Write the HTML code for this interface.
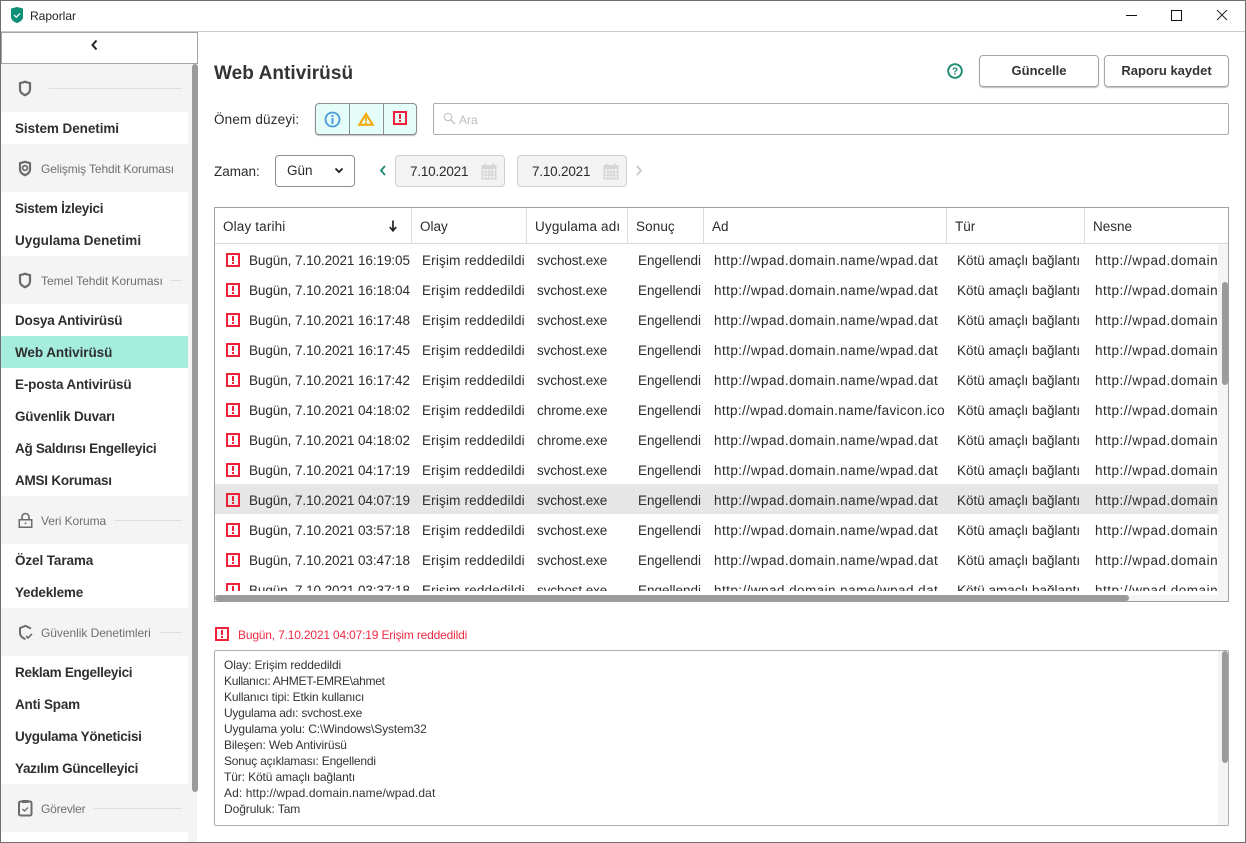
<!DOCTYPE html>
<html lang="tr"><head><meta charset="utf-8"><title>Raporlar</title>
<style>
*{box-sizing:border-box}
html,body{margin:0;padding:0;background:#fff}
body{width:1246px;height:843px;position:relative;overflow:hidden;font-family:"Liberation Sans",sans-serif;font-size:13.5px;color:#2b2b2b}
.a{position:absolute}
.t{position:absolute;white-space:nowrap;line-height:18px}
.g{position:absolute;left:1px;width:187px;background:#fff}
.sec{position:absolute;left:41px;font-size:12px;color:#6f6f6f;white-space:nowrap;line-height:16px}
.ln{position:absolute;height:1px;background:#e0e0e0}
.nav{position:absolute;left:15px;font-weight:bold;font-size:13.5px;color:#2f2f2f;white-space:nowrap;line-height:18px}
.th{position:absolute;top:218px;font-size:13.5px;white-space:nowrap;line-height:18px}
.cs{position:absolute;top:208px;width:1px;height:35px;background:#dcdcdc}
.ex{position:absolute;left:226px;width:14px;height:14px;border:2px solid #ee2139;background:transparent}
.ex:before{content:"";position:absolute;left:4px;top:1px;width:2px;height:5px;background:#ee2139}
.ex:after{content:"";position:absolute;left:4px;top:7px;width:2px;height:2px;background:#ee2139}
.r{position:absolute;left:0;width:1218px;height:30px}
.r .ex{top:8px}
.c{position:absolute;top:7px;white-space:nowrap;line-height:18px;font-size:13.5px;overflow:hidden}
.d{left:249px;width:165px;letter-spacing:-.08px}
.e{left:422px;width:104px;letter-spacing:.18px}
.s{left:537px;width:88px;letter-spacing:-.1px}
.n{left:638px;width:65px}
.u{left:714px;width:232px;letter-spacing:.44px}
.k{left:957px;width:127px}
.o{left:1095px;width:123px;letter-spacing:.5px}
.det{position:absolute;left:224px;font-size:12px;line-height:16px;color:#333;white-space:nowrap}
</style></head><body>

<!-- window frame -->
<div class="a" style="left:0;top:0;width:1246px;height:1px;background:#6e6e6e"></div>
<div class="a" style="left:0;top:0;width:1px;height:843px;background:#6e6e6e"></div>
<div class="a" style="left:1245px;top:0;width:1px;height:843px;background:#6e6e6e"></div>
<div class="a" style="left:0;top:842px;width:1246px;height:1px;background:#6e6e6e"></div>
<div class="a" style="left:1px;top:31px;width:1244px;height:1px;background:#c9c9c9"></div>

<!-- title -->
<svg class="a" style="left:10px;top:6px" width="14" height="18" viewBox="0 0 14 18"><path d="M1 2.500L7 1l6 1.500V11c0 3-3 5-6 6-3-1-6-3-6-6z" fill="#0f8f78"/><path d="M4 9l2.300 2.200L10 7.500" fill="none" stroke="#e6fff8" stroke-width="1.300"/></svg>
<div class="t" style="left:30px;top:7px;font-size:12px;color:#222">Raporlar</div>
<div class="a" style="left:1126px;top:15px;width:11px;height:1px;background:#111"></div>
<div class="a" style="left:1171px;top:10px;width:11px;height:11px;border:1px solid #111"></div>
<svg class="a" style="left:1216px;top:9px" width="12" height="12" viewBox="0 0 12 12"><path d="M1 1l10 10M11 1L1 11" stroke="#222" stroke-width="1" fill="none"/></svg>

<!-- sidebar -->
<div class="a" style="left:1px;top:64px;width:196px;height:778px;background:#f4f4f4"></div>
<div class="a" style="left:1px;top:32px;width:197px;height:32px;background:#fff;border:1px solid #a4a4a4"></div>
<svg class="a" style="left:90px;top:39px" width="9" height="12" viewBox="0 0 9 12"><path d="M6.500 1.500L2.500 6l4 4.500" fill="none" stroke="#222" stroke-width="2"/></svg>
<div class="a" style="left:192px;top:64px;width:6px;height:728px;background:#9b9b9b;border-radius:3px"></div>

<div class="g" style="top:112px;height:32px"></div>
<div class="g" style="top:192px;height:64px"></div>
<div class="g" style="top:304px;height:192px"></div>
<div class="g" style="top:544px;height:64px"></div>
<div class="g" style="top:656px;height:128px"></div>
<div class="g" style="top:832px;height:10px"></div>
<div class="a" style="left:1px;top:336px;width:187px;height:32px;background:#a5eedd"></div>

<svg class="a" style="left:18px;top:80px" width="14" height="17" viewBox="0 0 14 17"><path d="M2 3.200L7 1.800l5 1.400v6.300c0 2.800-2.300 4.600-5 5.700-2.700-1.100-5-2.900-5-5.700z" fill="none" stroke="#6b6b6b" stroke-width="2.200"/></svg>
<div class="ln" style="left:49px;top:88px;width:133px"></div>
<div class="nav" style="top:120px;letter-spacing:-.07px">Sistem Denetimi</div>

<svg class="a" style="left:18px;top:160px" width="14" height="17" viewBox="0 0 14 17"><path d="M2 3.200L7 1.800l5 1.400v6.300c0 2.800-2.300 4.600-5 5.700-2.700-1.100-5-2.900-5-5.700z" fill="none" stroke="#6b6b6b" stroke-width="2.200"/><circle cx="7" cy="8" r="2.400" fill="none" stroke="#6b6b6b" stroke-width="1.700"/></svg>
<div class="sec" style="top:161px;letter-spacing:-.12px">Gelişmiş Tehdit Koruması</div>
<div class="nav" style="top:200px;letter-spacing:-.27px">Sistem İzleyici</div>
<div class="nav" style="top:232px;letter-spacing:.05px">Uygulama Denetimi</div>

<svg class="a" style="left:18px;top:272px" width="14" height="17" viewBox="0 0 14 17"><path d="M2 3.200L7 1.800l5 1.400v6.300c0 2.800-2.300 4.600-5 5.700-2.700-1.100-5-2.900-5-5.700z" fill="none" stroke="#6b6b6b" stroke-width="2.200"/></svg>
<div class="sec" style="top:273px">Temel Tehdit Koruması</div>
<div class="ln" style="left:170px;top:280px;width:12px"></div>
<div class="nav" style="top:312px;letter-spacing:-.2px">Dosya Antivirüsü</div>
<div class="nav" style="top:344px;letter-spacing:-.07px">Web Antivirüsü</div>
<div class="nav" style="top:376px;letter-spacing:-.17px">E-posta Antivirüsü</div>
<div class="nav" style="top:408px;letter-spacing:-.2px">Güvenlik Duvarı</div>
<div class="nav" style="top:440px;letter-spacing:-.3px">Ağ Saldırısı Engelleyici</div>
<div class="nav" style="top:472px;letter-spacing:-.23px">AMSI Koruması</div>

<svg class="a" style="left:18px;top:512px" width="15" height="17" viewBox="0 0 15 17"><path d="M4 8V5a3.500 3.500 0 0 1 7 0v3" fill="none" stroke="#6b6b6b" stroke-width="1.600"/><rect x="0.500" y="7" width="14" height="9" fill="#6b6b6b"/><rect x="2" y="8.500" width="11" height="6" fill="#f4f4f4"/><rect x="6.700" y="10.500" width="1.600" height="1.600" fill="#6b6b6b"/></svg>
<div class="sec" style="top:513px;letter-spacing:-.08px">Veri Koruma</div>
<div class="ln" style="left:114px;top:520px;width:68px"></div>
<div class="nav" style="top:552px;letter-spacing:-.1px">Özel Tarama</div>
<div class="nav" style="top:584px;letter-spacing:-.2px">Yedekleme</div>

<svg class="a" style="left:18px;top:624px" width="15" height="17" viewBox="0 0 15 17"><path d="M13 4.500L7.500 1.800 2 4v5c0 3 2.500 5 5.500 6.200" fill="none" stroke="#6b6b6b" stroke-width="2"/><path d="M8 12l2 2 4-4" fill="none" stroke="#6b6b6b" stroke-width="1.600"/></svg>
<div class="sec" style="top:625px;letter-spacing:-.05px">Güvenlik Denetimleri</div>
<div class="ln" style="left:159px;top:632px;width:23px"></div>
<div class="nav" style="top:664px;letter-spacing:-.28px">Reklam Engelleyici</div>
<div class="nav" style="top:696px;letter-spacing:-.2px">Anti Spam</div>
<div class="nav" style="top:728px;letter-spacing:-.27px">Uygulama Yöneticisi</div>
<div class="nav" style="top:760px;letter-spacing:-.3px">Yazılım Güncelleyici</div>

<svg class="a" style="left:18px;top:799px" width="15" height="18" viewBox="0 0 15 18"><rect x="1" y="2.500" width="12.500" height="14" rx="1.500" fill="none" stroke="#6b6b6b" stroke-width="2"/><rect x="4" y="1" width="6.500" height="3" fill="#6b6b6b"/><path d="M4.500 10l2 2 3.500-3.500" fill="none" stroke="#6b6b6b" stroke-width="1.300"/></svg>
<div class="sec" style="top:801px;letter-spacing:-.2px">Görevler</div>
<div class="ln" style="left:94px;top:808px;width:88px"></div>

<!-- heading -->
<div class="t" style="left:214px;top:62px;font-size:19px;font-weight:bold;color:#333;line-height:24px;letter-spacing:.06px">Web Antivirüsü</div>
<svg class="a" style="left:947px;top:63px" width="16" height="16" viewBox="0 0 16 16"><circle cx="8" cy="8" r="6.800" fill="none" stroke="#1c8a70" stroke-width="1.900"/><text x="8" y="11.700" font-size="10" font-weight="bold" text-anchor="middle" fill="#1c8a70" font-family="Liberation Sans">?</text></svg>
<div class="a" style="left:979px;top:55px;width:120px;height:32px;border:1px solid #a6a6a6;border-radius:4px;box-shadow:0 1px 1px #bbb;text-align:center;line-height:29px;font-weight:bold;font-size:13px;color:#333">Güncelle</div>
<div class="a" style="left:1104px;top:55px;width:125px;height:32px;border:1px solid #a6a6a6;border-radius:4px;box-shadow:0 1px 1px #bbb;text-align:center;line-height:29px;font-weight:bold;font-size:13px;color:#333">Raporu kaydet</div>

<!-- filter row -->
<div class="t" style="left:214px;top:111px;font-size:13.5px;letter-spacing:.17px">Önem düzeyi:</div>
<div class="a" style="left:315px;top:103px;width:102px;height:32px;background:#e4fdf9;border:1px solid #8d8d8d;border-radius:4px;box-shadow:0 1px 1px #bbb"></div>
<div class="a" style="left:349px;top:104px;width:1px;height:30px;background:#8d8d8d"></div>
<div class="a" style="left:383px;top:104px;width:1px;height:30px;background:#8d8d8d"></div>
<svg class="a" style="left:324px;top:111px" width="18" height="18" viewBox="0 0 18 18"><circle cx="8.500" cy="8.500" r="7" fill="none" stroke="#4a9bd8" stroke-width="1.800"/><rect x="7.500" y="4" width="2" height="2" fill="#4a9bd8"/><rect x="7.500" y="7" width="2" height="6" fill="#4a9bd8"/></svg>
<svg class="a" style="left:357px;top:111px" width="18" height="16" viewBox="0 0 18 16"><path d="M9 3L15.700 13.700H2.300z" fill="none" stroke="#f6a400" stroke-width="2"/><rect x="8.100" y="6" width="1.800" height="4.200" fill="#f6a400"/><rect x="8.100" y="11" width="1.800" height="1.700" fill="#f6a400"/></svg>
<div class="ex" style="left:393px;top:111px"></div>
<div class="a" style="left:433px;top:103px;width:796px;height:32px;border:1px solid #adadad;border-radius:2px"></div>
<svg class="a" style="left:443px;top:112px" width="13" height="13" viewBox="0 0 13 13"><circle cx="5" cy="5" r="3.700" fill="none" stroke="#c4c4c4" stroke-width="1.200"/><path d="M8 8l4 4" stroke="#c4c4c4" stroke-width="1.500"/></svg>
<div class="t" style="left:459px;top:111px;font-size:12px;color:#bdbdbd">Ara</div>

<!-- time row -->
<div class="t" style="left:214px;top:163px">Zaman:</div>
<div class="a" style="left:275px;top:155px;width:80px;height:32px;border:1px solid #8d8d8d;border-radius:4px"></div>
<div class="t" style="left:287px;top:162px">Gün</div>
<svg class="a" style="left:334px;top:167px" width="10" height="7" viewBox="0 0 10 7"><path d="M1.500 1.500L5 5l3.500-3.500" fill="none" stroke="#222" stroke-width="1.900"/></svg>
<svg class="a" style="left:379px;top:165px" width="8" height="11" viewBox="0 0 8 11"><path d="M6 1L2 5.500 6 10" fill="none" stroke="#1c8a70" stroke-width="1.800"/></svg>
<div class="a" style="left:395px;top:155px;width:110px;height:32px;background:#f3f3f3;border:1px solid #cfcfcf;border-radius:4px"></div>
<div class="t" style="left:410px;top:163px;letter-spacing:-.2px">7.10.2021</div>
<div class="a" style="left:517px;top:155px;width:110px;height:32px;background:#f3f3f3;border:1px solid #cfcfcf;border-radius:4px"></div>
<div class="t" style="left:532px;top:163px;letter-spacing:-.2px">7.10.2021</div>
<svg class="a" style="left:481px;top:163px" width="16" height="17" viewBox="0 0 16 17"><rect x="0.500" y="2" width="15" height="14.500" fill="#d6d6d6"/><rect x="2" y="6" width="12" height="9" fill="#f3f3f3"/><path d="M2 9h12M2 12h12M5 6v9M8 6v9M11 6v9" stroke="#cfcfcf" stroke-width="1"/><rect x="3" y="0.500" width="1.500" height="3" fill="#d6d6d6"/><rect x="11.500" y="0.500" width="1.500" height="3" fill="#d6d6d6"/></svg>
<svg class="a" style="left:603px;top:163px" width="16" height="17" viewBox="0 0 16 17"><rect x="0.500" y="2" width="15" height="14.500" fill="#d6d6d6"/><rect x="2" y="6" width="12" height="9" fill="#f3f3f3"/><path d="M2 9h12M2 12h12M5 6v9M8 6v9M11 6v9" stroke="#cfcfcf" stroke-width="1"/><rect x="3" y="0.500" width="1.500" height="3" fill="#d6d6d6"/><rect x="11.500" y="0.500" width="1.500" height="3" fill="#d6d6d6"/></svg>
<svg class="a" style="left:635px;top:165px" width="8" height="11" viewBox="0 0 8 11"><path d="M2 1l4 4.500L2 10" fill="none" stroke="#c8c8c8" stroke-width="1.800"/></svg>

<!-- table -->
<div class="a" style="left:214px;top:207px;width:1015px;height:395px;border:1px solid #a0a0a0"></div>
<div class="cs" style="left:411px"></div><div class="cs" style="left:526px"></div><div class="cs" style="left:627px"></div><div class="cs" style="left:703px"></div><div class="cs" style="left:946px"></div><div class="cs" style="left:1084px"></div>
<div class="th" style="left:223px;letter-spacing:.15px">Olay tarihi</div>
<svg class="a" style="left:388px;top:220px" width="10" height="12" viewBox="0 0 10 12"><path d="M5 0.500V10M1.800 7L5 10.800 8.200 7" fill="none" stroke="#222" stroke-width="1.700"/></svg>
<div class="th" style="left:420px">Olay</div>
<div class="th" style="left:535px;letter-spacing:.17px">Uygulama adı</div>
<div class="th" style="left:636px;letter-spacing:.1px">Sonuç</div>
<div class="th" style="left:712px">Ad</div>
<div class="th" style="left:955px">Tür</div>
<div class="th" style="left:1093px">Nesne</div>

<div class="a" style="left:215px;top:484px;width:1003px;height:30px;background:#e6e6e6"></div>

<!-- rows -->
<div class="r" style="top:245px"><div class="ex"></div><div class="c d">Bugün, 7.10.2021 16:19:05</div><div class="c e">Erişim reddedildi</div><div class="c s">svchost.exe</div><div class="c n">Engellendi</div><div class="c u">http://wpad.domain.name/wpad.dat</div><div class="c k">Kötü amaçlı bağlantı</div><div class="c o">http://wpad.domain</div></div>
<div class="r" style="top:275px"><div class="ex"></div><div class="c d">Bugün, 7.10.2021 16:18:04</div><div class="c e">Erişim reddedildi</div><div class="c s">svchost.exe</div><div class="c n">Engellendi</div><div class="c u">http://wpad.domain.name/wpad.dat</div><div class="c k">Kötü amaçlı bağlantı</div><div class="c o">http://wpad.domain</div></div>
<div class="r" style="top:305px"><div class="ex"></div><div class="c d">Bugün, 7.10.2021 16:17:48</div><div class="c e">Erişim reddedildi</div><div class="c s">svchost.exe</div><div class="c n">Engellendi</div><div class="c u">http://wpad.domain.name/wpad.dat</div><div class="c k">Kötü amaçlı bağlantı</div><div class="c o">http://wpad.domain</div></div>
<div class="r" style="top:335px"><div class="ex"></div><div class="c d">Bugün, 7.10.2021 16:17:45</div><div class="c e">Erişim reddedildi</div><div class="c s">svchost.exe</div><div class="c n">Engellendi</div><div class="c u">http://wpad.domain.name/wpad.dat</div><div class="c k">Kötü amaçlı bağlantı</div><div class="c o">http://wpad.domain</div></div>
<div class="r" style="top:365px"><div class="ex"></div><div class="c d">Bugün, 7.10.2021 16:17:42</div><div class="c e">Erişim reddedildi</div><div class="c s">svchost.exe</div><div class="c n">Engellendi</div><div class="c u">http://wpad.domain.name/wpad.dat</div><div class="c k">Kötü amaçlı bağlantı</div><div class="c o">http://wpad.domain</div></div>
<div class="r" style="top:395px"><div class="ex"></div><div class="c d">Bugün, 7.10.2021 04:18:02</div><div class="c e">Erişim reddedildi</div><div class="c s" style="letter-spacing:0">chrome.exe</div><div class="c n">Engellendi</div><div class="c u" style="letter-spacing:.34px">http://wpad.domain.name/favicon.ico</div><div class="c k">Kötü amaçlı bağlantı</div><div class="c o">http://wpad.domain</div></div>
<div class="r" style="top:425px"><div class="ex"></div><div class="c d">Bugün, 7.10.2021 04:18:02</div><div class="c e">Erişim reddedildi</div><div class="c s" style="letter-spacing:0">chrome.exe</div><div class="c n">Engellendi</div><div class="c u">http://wpad.domain.name/wpad.dat</div><div class="c k">Kötü amaçlı bağlantı</div><div class="c o">http://wpad.domain</div></div>
<div class="r" style="top:455px"><div class="ex"></div><div class="c d">Bugün, 7.10.2021 04:17:19</div><div class="c e">Erişim reddedildi</div><div class="c s">svchost.exe</div><div class="c n">Engellendi</div><div class="c u">http://wpad.domain.name/wpad.dat</div><div class="c k">Kötü amaçlı bağlantı</div><div class="c o">http://wpad.domain</div></div>
<div class="r" style="top:485px"><div class="ex"></div><div class="c d">Bugün, 7.10.2021 04:07:19</div><div class="c e">Erişim reddedildi</div><div class="c s">svchost.exe</div><div class="c n">Engellendi</div><div class="c u">http://wpad.domain.name/wpad.dat</div><div class="c k">Kötü amaçlı bağlantı</div><div class="c o">http://wpad.domain</div></div>
<div class="r" style="top:515px"><div class="ex"></div><div class="c d">Bugün, 7.10.2021 03:57:18</div><div class="c e">Erişim reddedildi</div><div class="c s">svchost.exe</div><div class="c n">Engellendi</div><div class="c u">http://wpad.domain.name/wpad.dat</div><div class="c k">Kötü amaçlı bağlantı</div><div class="c o">http://wpad.domain</div></div>
<div class="r" style="top:545px"><div class="ex"></div><div class="c d">Bugün, 7.10.2021 03:47:18</div><div class="c e">Erişim reddedildi</div><div class="c s">svchost.exe</div><div class="c n">Engellendi</div><div class="c u">http://wpad.domain.name/wpad.dat</div><div class="c k">Kötü amaçlı bağlantı</div><div class="c o">http://wpad.domain</div></div>
<div class="r" style="top:575px"><div class="ex"></div><div class="c d">Bugün, 7.10.2021 03:37:18</div><div class="c e">Erişim reddedildi</div><div class="c s">svchost.exe</div><div class="c n">Engellendi</div><div class="c u">http://wpad.domain.name/wpad.dat</div><div class="c k">Kötü amaçlı bağlantı</div><div class="c o">http://wpad.domain</div></div>

<!-- table scrollbars -->
<div class="a" style="left:215px;top:591px;width:1003px;height:4px;background:#fff"></div>
<div class="a" style="left:215px;top:595px;width:1013px;height:6px;background:#f4f4f4"></div>
<div class="a" style="left:215px;top:595px;width:914px;height:6px;background:#9b9b9b;border-radius:3px"></div>
<div class="a" style="left:1218px;top:244px;width:10px;height:357px;background:#f4f4f4"></div>
<div class="a" style="left:215px;top:243px;width:1013px;height:1px;background:#d8d8d8"></div>
<div class="a" style="left:1222px;top:282px;width:6px;height:103px;background:#9b9b9b;border-radius:3px"></div>

<!-- detail -->
<div class="ex" style="left:215px;top:627px"></div>
<div class="t" style="left:238px;top:626px;font-size:12px;color:#ee2c44;letter-spacing:-.18px">Bugün, 7.10.2021 04:07:19 Erişim reddedildi</div>
<div class="a" style="left:214px;top:650px;width:1015px;height:176px;border:1px solid #adadad;border-radius:2px"></div>
<div class="a" style="left:1218px;top:651px;width:10px;height:174px;background:#f4f4f4"></div>
<div class="a" style="left:1222px;top:651px;width:6px;height:112px;background:#9b9b9b;border-radius:3px"></div>
<div class="det" style="top:657px;letter-spacing:-.13px">Olay: Erişim reddedildi</div>
<div class="det" style="top:673px;letter-spacing:-.3px">Kullanıcı: AHMET-EMRE\ahmet</div>
<div class="det" style="top:689px;letter-spacing:-.17px">Kullanıcı tipi: Etkin kullanıcı</div>
<div class="det" style="top:705px;letter-spacing:-.24px">Uygulama adı: svchost.exe</div>
<div class="det" style="top:721px;letter-spacing:-.12px">Uygulama yolu: C:\Windows\System32</div>
<div class="det" style="top:737px;letter-spacing:-.13px">Bileşen: Web Antivirüsü</div>
<div class="det" style="top:753px;letter-spacing:-.2px">Sonuç açıklaması: Engellendi</div>
<div class="det" style="top:769px;letter-spacing:-.12px">Tür: Kötü amaçlı bağlantı</div>
<div class="det" style="top:785px;letter-spacing:.09px">Ad: http://wpad.domain.name/wpad.dat</div>
<div class="det" style="top:801px;letter-spacing:-.07px">Doğruluk: Tam</div>
</body></html>
